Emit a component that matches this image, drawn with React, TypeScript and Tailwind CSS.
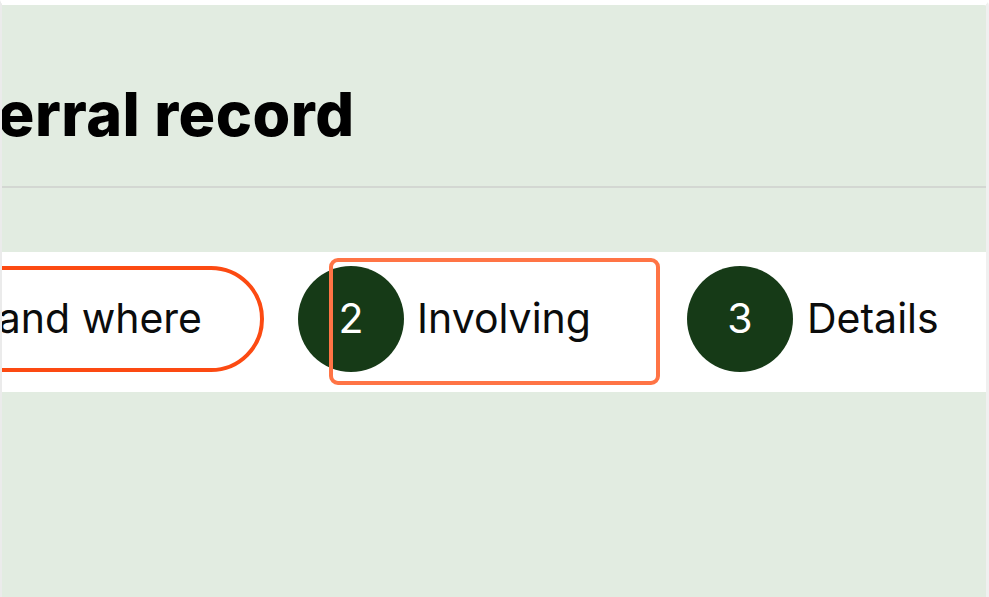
import React from "react";

export default function App() {
  return (
    <div className="w-[989px] h-[597px] overflow-hidden bg-white">
      <div className="w-full h-full overflow-hidden bg-[#e2ece1] border-t-[5px] border-t-white border-l-2 border-l-[#ebebeb] border-r-[3px] border-r-[#f0f0f0] rounded-tr-[6px] flex flex-col" style={{ fontFamily: "Inter, 'Liberation Sans', sans-serif" }}>
        <div className="h-[181px] shrink-0 overflow-hidden">
          <h1 className="mt-[79px] -ml-[106px] whitespace-nowrap text-[61px] leading-none font-extrabold tracking-[0.5px] text-black">
            Referral record
          </h1>
        </div>
        <div className="h-[2px] shrink-0 bg-[#d3d7d2]" />
        <div className="h-[64px] shrink-0" />
        <div className="relative h-[140px] shrink-0 bg-white flex items-start pt-[14px] text-[41px] text-[#0b0c0c]">
          <div className="w-[400px] -ml-[138px] shrink-0 h-[106px] rounded-full border-[4px] border-[#fc4a12] flex items-center justify-end pr-[58px] whitespace-nowrap">
            When and where
          </div>
          <div className="ml-[34px] w-[389px] shrink-0 flex items-center">
            <div className="w-[106px] h-[106px] rounded-full bg-[#163a17] text-white flex items-center justify-center shrink-0">2</div>
            <span className="ml-[13px]">Involving</span>
          </div>
          <div className="shrink-0 flex items-center">
            <div className="w-[106px] h-[106px] rounded-full bg-[#163a17] text-white flex items-center justify-center shrink-0">3</div>
            <span className="ml-[14px]">Details</span>
          </div>
          <div className="absolute left-[327px] top-[6px] w-[331px] h-[127px] rounded-[9px] border-4 border-[#ff7445]" />
        </div>
      </div>
    </div>
  );
}
